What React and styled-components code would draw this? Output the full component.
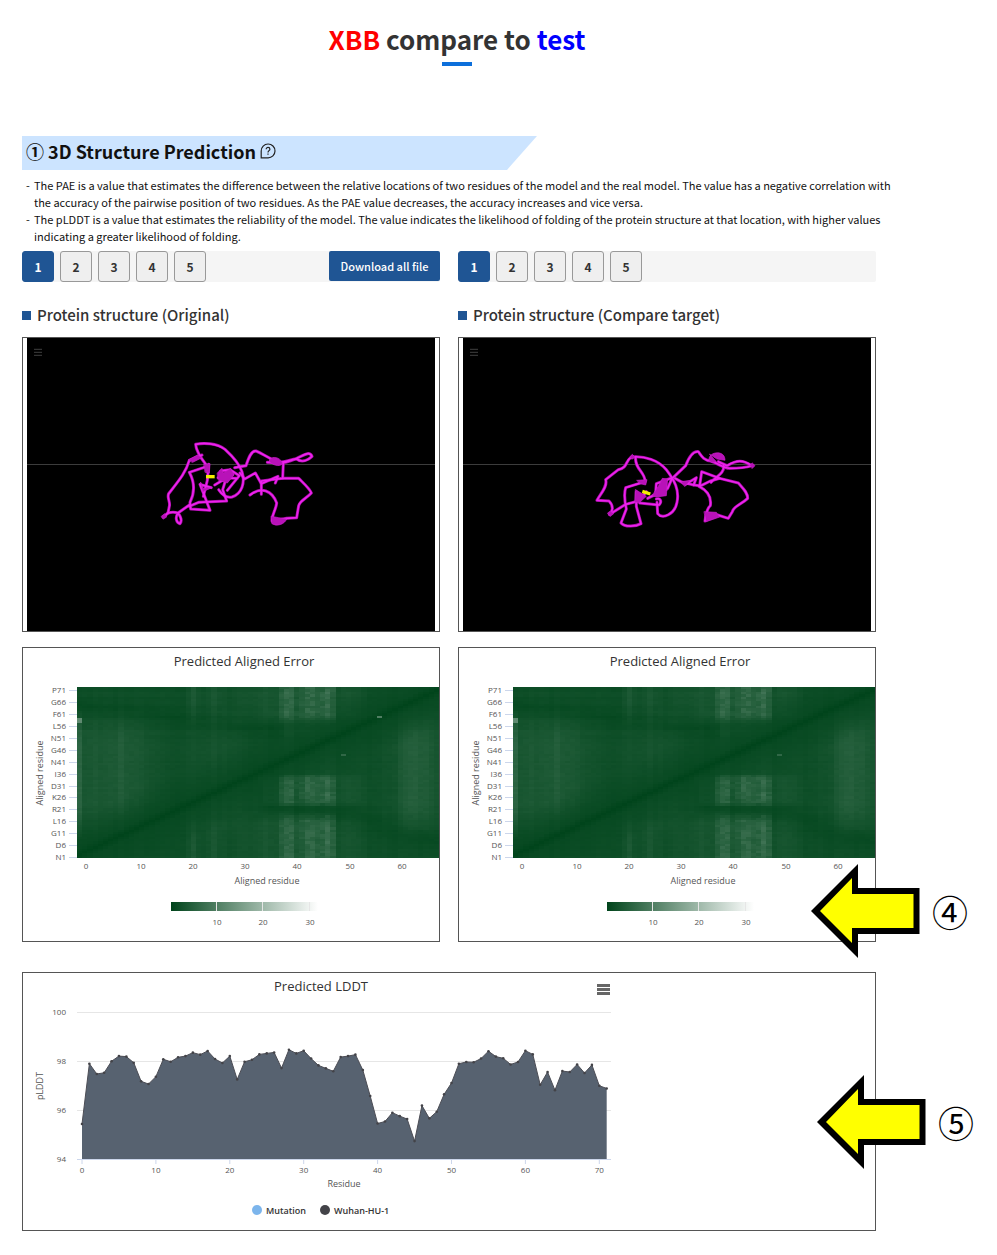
import React from "react";
import styled, { createGlobalStyle } from "styled-components";

const sans = '"Noto Sans CJK KR", "Noto Sans", sans-serif';
const chartSans = '"Open Sans", "Noto Sans", sans-serif';

const GlobalStyle = createGlobalStyle`
  *, *::before, *::after { box-sizing: border-box; }
  body { margin: 0; background: #fff; color: #333; font-family: ${sans}; }
`;

const Page = styled.main`
  padding: 20px 105px 24px 22px;
`;

const PageTitle = styled.h1`
  display: flex;
  flex-direction: column;
  align-items: center;
  gap: 4px;
  margin: 0 0 70px;
  font-size: 26px;
  line-height: 38px;
  font-weight: 700;
  &::after { content: ""; width: 30px; height: 4px; background: #0d6fdb; }
`;

const Variant = styled.span`
  color: ${(p) => p.$color};
`;

const Banner = styled.h2`
  display: flex;
  align-items: center;
  gap: 4px;
  width: 60%;
  max-width: 515px;
  height: 34px;
  margin: 0;
  padding: 0 0 4px 4px;
  background: #cce4ff;
  clip-path: polygon(0 0, 100% 0, calc(100% - 30px) 100%, 0 100%);
  color: #111;
  font-size: 18px;
  line-height: 30px;
  font-weight: 700;
`;

const Notes = styled.ul`
  margin: 7px -16px 6px 0;
  padding: 0 0 0 12px;
  list-style: none;
  color: #111;
  font-size: 11px;
  line-height: 17px;
  font-weight: 400;
`;

const Note = styled.li`
  &::before { content: "-"; float: left; margin-left: -8px; }
`;

const Columns = styled.div`
  display: grid;
  grid-template-columns: 1fr 1fr;
  gap: 15px 18px;
  margin-right: 16px;
`;

const Toolbar = styled.div`
  display: flex;
  gap: 6px;
  height: 31px;
  background: #f5f5f5;
  border-radius: 2px;
`;

const PageButton = styled.button`
  width: 32px;
  height: 31px;
  padding: 0;
  border: 1px solid ${(p) => (p.$active ? "#1f5594" : "#999")};
  border-radius: 3px;
  background: ${(p) => (p.$active ? "#1f5594" : "#efefef")};
  color: ${(p) => (p.$active ? "#fff" : "#333")};
  font: 700 12px/29px ${sans};
`;

const DownloadButton = styled.button`
  width: 111px;
  height: 30px;
  margin-left: auto;
  padding: 0;
  border: 0;
  border-radius: 2px;
  background: #1f5594;
  color: #fff;
  font: 500 11px/30px ${sans};
`;

const Subheading = styled.h3`
  display: flex;
  align-items: center;
  gap: 6px;
  height: 24px;
  margin: 6px 0 -5px;
  font-size: 15px;
  line-height: 24px;
  font-weight: 500;
  &::before { content: ""; width: 9px; height: 9px; background: #1f5594; }
`;

const Panel = styled.section`
  position: relative;
  border: 1px solid #555;
  background: #fff;
  svg { display: block; }
`;

const Viewer = styled(Panel)`
  padding: 0 4px;
  svg { width: 100%; height: auto; background: #000; }
`;

const WidePanel = styled(Panel)`
  margin: 30px 16px 0 0;
`;

const LddtArea = styled.div`
  position: relative;
  max-width: 596px;
`;

const MenuButton = styled.button`
  position: absolute;
  top: 9px;
  right: 7px;
  display: grid;
  place-items: center;
  width: 17px;
  height: 15px;
  padding: 0;
  border: 0;
  background: none;
`;

const Callout = styled.div`
  position: absolute;
  top: ${(p) => p.$top};
  right: ${(p) => p.$right};
  display: flex;
  align-items: center;
  gap: 12px;
  color: #000;
  font-size: 36px;
  line-height: 40px;
  font-weight: 400;
`;

const chartText = { fontFamily: chartSans };

function HelpIcon() {
  return (
    <svg width="16" height="16" viewBox="0 0 16 16" fill="none" stroke="#222" strokeWidth="1.2" aria-hidden="true">
      <path d="M1.2 14.8V8A6.9 6.9 0 1 1 8 14.8Z" />
      <path d="M6.2 6.2C6.2 3.8 9.9 3.9 9.9 6.2C9.9 7.6 8 7.7 8 9.4M8 10.6V11.8" />
    </svg>
  );
}

function Arrow() {
  return (
    <svg width="110" height="94" viewBox="0 0 110 94" aria-hidden="true">
      <path d="M1 47L48 0V24H109.500V70H48V94Z" fill="#000" />
      <path d="M10 47L42 14V30H103.500V64H42V79Z" fill="#ff0" />
    </svg>
  );
}

function Pager({ children }) {
  return (
    <Toolbar>
      {[1, 2, 3, 4, 5].map((n) => (
        <PageButton key={n} type="button" $active={n === 1}>{n}</PageButton>
      ))}
      {children}
    </Toolbar>
  );
}

const originalFold = {
  x: 369,
  y: 279,
  strands: [
    "M172 106C158 88 138 64 137 40C160 35 200 36 225 55C250 78 268 98 276 122C286 155 276 188 246 198C226 202 214 188 206 176",
    "M156 72L118 88C108 122 92 142 56 188C50 202 62 212 58 226L54 246L40 258",
    "M172 106L118 124C132 150 136 182 120 214L122 234L180 238L150 160L184 170",
    "M176 100L172 148L160 196",
    "M118 226L146 214L230 210L218 176L226 150",
    "M54 246C66 242 78 244 84 246C74 260 80 276 90 278C98 268 90 254 84 246L118 222",
    "M212 120L240 116L268 134L232 178M194 162L248 130M204 140L262 142",
    "M254 110L288 104C296 80 304 58 318 60C336 66 350 80 382 92C404 104 424 84 440 84C458 98 478 84 486 76C478 58 460 74 440 82C420 88 404 94 386 94",
    "M270 126L284 144L316 126L334 158L384 136L376 156",
    "M334 190V150L398 142L400 96L352 94",
    "M398 142L446 142C462 158 480 174 484 186C470 202 450 208 446 224L440 260L410 262L378 268",
    "M300 192C334 166 366 178 380 216C378 238 366 246 366 270",
  ],
  ribbons: [
    "M360 94C350 82 378 70 394 90C404 102 382 112 360 94Z",
    "M152 154L160 172L186 170L158 182Z",
    "M202 126L216 112L220 126L242 112L252 132L232 156L206 148Z",
    "M364 256L386 260L410 264C404 280 380 288 366 278Z",
    "M116 86L142 72L156 80L128 94ZM162 100L180 98L178 126L166 124Z",
    "M34 256L44 248L50 258L40 264Z",
  ],
  bridge: "M168 137H194",
};

const targetFold = {
  x: 366,
  y: 309,
  strands: [
    "M140 48C120 58 130 80 100 86L62 116C68 136 48 156 36 178L72 180C86 194 84 210 74 220",
    "M140 48C180 44 220 58 244 86C268 118 284 146 276 184C270 220 232 236 218 218L216 184",
    "M152 48C148 84 182 94 180 122L122 140C116 160 120 186 124 204L108 246C120 260 154 256 168 248L154 196V152",
    "M74 220L122 190L160 180L184 152",
    "M164 186L222 192C232 182 226 170 214 174",
    "M188 172L248 142L262 110L214 128L212 154L244 146",
    "M262 112L302 74C312 48 326 30 340 32C350 46 356 58 378 60C404 70 416 82 434 82C454 82 476 82 500 74C474 56 456 56 426 74L400 62",
    "M270 112L302 130L334 110L326 132L294 124",
    "M326 132L344 134L350 92L404 112L376 120L344 136",
    "M404 112L460 126C474 142 488 154 488 172C470 190 446 194 442 212L430 232L398 222L362 238",
    "M342 136C366 148 380 168 376 194C364 204 362 224 360 240",
    "M416 74C418 98 396 104 378 124",
  ],
  ribbons: [
    "M374 40L394 62C370 72 364 48 384 38C400 32 420 36 420 58L396 54Z",
    "M152 146L184 166L164 184L150 184Z",
    "M220 136L232 112L248 114L244 164L214 168L202 164Z",
    "M358 212L394 214L404 228L364 242Z",
    "M288 122L316 118L300 136Z",
    "M68 216L76 210L86 218L76 226Z",
    "M494 72L502 66L510 74L502 82ZM134 48L142 40L150 48L142 54Z",
    "M156 118L186 116L182 132L166 128Z",
  ],
  bridge: "M172 151L196 159",
};

function Fold({ data, label }) {
  return (
    <svg viewBox="0 0 1224 879" role="img" aria-label={label}>
      <path d="M21 34H45M21 43H45M21 52H45" stroke="#333" strokeWidth="4" />
      <path d="M0 379.500H1224" stroke="#3c3c3c" strokeWidth="3" />
      <g transform={`translate(${data.x} ${data.y})`} fill="none" strokeLinejoin="round" strokeLinecap="round">
        {data.strands.map((d) => <path key={d} d={d} stroke="#a50fa5" strokeWidth="9" />)}
        {data.strands.map((d) => <path key={d} d={d} stroke="#ee22ee" strokeWidth="5" />)}
        {data.ribbons.map((d) => <path key={d} d={d} fill="#b812b8" stroke="#d01cd0" strokeWidth="2" />)}
        <path d={data.bridge} stroke="#f4ee00" strokeWidth="10" strokeLinecap="butt" />
      </g>
    </svg>
  );
}

const COLS = 70;
const ROWS = 72;
const clamp = (v) => Math.max(0, Math.min(1, v));
const bump = (v, mid, width) => Math.exp(-((v - mid) * (v - mid)) / (width * width));
const band = (v, from, to, soft) => clamp((v - from) / soft + 0.5) * clamp((to - v) / soft + 0.5);
const noise = (a, b) => {
  const s = Math.sin(a * 12.9898 + b * 78.233) * 43758.5453;
  return s - Math.floor(s);
};

const loopWeights = { 39: 2.4, 40: 4.2, 41: 3.6, 42: 2, 43: 3, 44: 4.2, 45: 4, 46: 3.2, 47: 3.4, 48: 4.8, 49: 2.6 };

function errorAt(col, row, outlier) {
  if (col === 0 && (row === 57 || row === 58)) return 12;
  if (col === 51 && row === 43) return 6;
  if (outlier && col === 58 && row === 59) return 10;
  const distance = Math.abs(row - col - 1);
  const away = clamp(distance / 16);
  const middle = band(row, 14, 57, 14);
  const outer = 1 - band(row, 14, 60, 12);
  const loop = Math.max(band(row, -8, 17, 4), band(row, 22, 34, 2), band(row, 58, 82, 3));
  let v = 0.8 * clamp(distance / 3) + 0.9 * away;
  v += middle * away * (1.6 * bump(col, 2, 3) + 2.2 * bump(col, 8, 3) + bump(col, 13, 3));
  v += (col === 0 ? 3 : 0) * middle;
  v += away * outer * (1.6 * bump(col, 22, 1) + 1.2 * bump(col, 26, 2) + 0.9 * bump(col, 33, 3));
  v += away * middle * 0.8 * bump(col, 26, 6);
  v += away * middle * 2.6 * bump(col, 65, 4);
  if (loopWeights[col]) {
    v += loopWeights[col] * (0.12 + loop * (0.75 + 0.35 * noise(col, row))) * clamp(distance / 10);
  }
  v += away * loop * 1.1 * (bump(col, 37, 2) + bump(col, 52, 3));
  v *= 0.82 + 0.2 * noise(col, 3) + 0.14 * noise(col, row);
  if (col < 40) v -= 0.8 * bump(row, 63 - col * 0.26, 4) * away;
  if (col > 34) v -= 0.8 * bump(row, 42 - col * 0.5, 5) * away;
  return Math.max(0, v + (noise(row, 9) - 0.5) * 0.4 * away);
}

function shade(v) {
  const t = Math.min(1, v / 32);
  return `rgb(${Math.round(255 * t)},${Math.round(68 + 187 * t)},${Math.round(27 + 228 * t)})`;
}

const yResidues = ["N1", "D6", "G11", "L16", "R21", "K26", "D31", "I36", "N41", "G46", "N51", "L56", "F61", "G66", "P71"];

function AlignedErrorChart({ id, outlier }) {
  const cells = [];
  const w = 362 / COLS;
  const h = 171 / ROWS;
  for (let c = 0; c < COLS; c += 1) {
    for (let r = 0; r < ROWS; r += 1) {
      cells.push(
        <rect key={`${c}-${r}`} x={c * w} y={171 - (r + 1) * h} width={w} height={h} fill={shade(errorAt(c, r, outlier))} />
      );
    }
  }
  return (
    <svg viewBox="0 0 416 293" width="100%" style={chartText} role="img" aria-label="Predicted Aligned Error">
      <text x="221" y="18" textAnchor="middle" fontSize="13" fill="#333">Predicted Aligned Error</text>
      <rect x="54" y="39" width="362" height="171" fill="#0a4d24" />
      <g transform="translate(54 39)" shapeRendering="crispEdges">{cells}</g>
      <g fontSize="8" fill="#555" textAnchor="end">
        {yResidues.map((t, i) => <text key={t} x="43" y={212 - Math.round(i * 11.9)}>{t}</text>)}
      </g>
      <path d={yResidues.map((t, i) => `M46 ${209.5 - Math.round(i * 11.9)}H54`).join("")} stroke="#ccd6eb" />
      <g fontSize="8" fill="#555" textAnchor="middle">
        {[0, 10, 20, 30, 40, 50, 60].map((n) => <text key={n} x={n ? Math.round(65.5 + n * 5.22) : 63} y="221">{n}</text>)}
      </g>
      <text x="244" y="236" textAnchor="middle" fontSize="9" fill="#555">Aligned residue</text>
      <text transform="translate(20 125) rotate(-90)" textAnchor="middle" fontSize="9" fill="#555">Aligned residue</text>
      <defs>
        <linearGradient id={id}>
          <stop offset="0" stopColor="#00441b" />
          <stop offset="1" stopColor="#fff" />
        </linearGradient>
      </defs>
      <rect x="148" y="254" width="147" height="9" fill={`url(#${id})`} />
      <path d="M193.500 254V263M239.500 254V263M286.500 254V263" stroke="#e6e6e6" />
      <g fontSize="8" fill="#555" textAnchor="middle">
        <text x="194" y="277">10</text>
        <text x="240" y="277">20</text>
        <text x="287" y="277">30</text>
      </g>
    </svg>
  );
}

const scores = [
  95.43, 97.89, 97.47, 97.52, 97.99, 98.2, 98.18, 97.93, 97.17, 97.06, 97.36, 98.07, 97.97, 98.15, 98.2, 98.34, 98.26, 98.41,
  98.08, 97.92, 98.2, 97.25, 97.97, 98.05, 98.27, 98.31, 98.35, 97.71, 98.46, 98.31, 98.42, 98.1, 97.82, 97.7, 97.58, 98.16,
  98.2, 98.26, 97.63, 96.57, 95.45, 95.53, 95.89, 95.75, 95.63, 94.73, 96.18, 95.66, 95.93, 96.64, 97.1, 97.89, 97.96, 97.95,
  98.1, 98.4, 98.18, 98.11, 97.86, 97.96, 98.42, 98.27, 97.03, 97.55, 96.81, 97.59, 97.55, 97.86, 97.51, 97.84, 96.99, 96.88,
];

function LddtChart() {
  const px = (i) => 59 + i * 7.39;
  const py = (v) => 39 + (100 - v) * 24.5;
  const line = scores.map((v, i) => `${px(i)},${py(v)}`).join(" ");
  return (
    <svg viewBox="0 0 596 257" width="100%" style={chartText} role="img" aria-label="Predicted LDDT">
      <text x="298" y="18" textAnchor="middle" fontSize="13" fill="#333">Predicted LDDT</text>
      <path d="M54 39.500H588M54 88.500H588M54 137.500H588" stroke="#e6e6e6" />
      <path d="M54 186.500H588" stroke="#ccd6eb" />
      <path d={[0, 10, 20, 30, 40, 50, 60, 70].map((n) => `M${px(n)} 186V191`).join("")} stroke="#ccd6eb" />
      <polygon points={`${px(0)},186 ${line} ${px(71)},186`} fill="#576270" />
      <polyline points={line} fill="none" stroke="#4c4d55" />
      {scores.map((v, i) => <circle key={i} cx={px(i)} cy={py(v)} r="1.3" fill="#434348" />)}
      <g fontSize="8" fill="#555" textAnchor="end">
        <text x="43" y="42">100</text>
        <text x="43" y="91">98</text>
        <text x="43" y="140">96</text>
        <text x="43" y="189">94</text>
      </g>
      <g fontSize="8" fill="#555" textAnchor="middle">
        {[0, 10, 20, 30, 40, 50, 60, 70].map((n) => <text key={n} x={px(n)} y="200">{n}</text>)}
      </g>
      <text x="321" y="214" textAnchor="middle" fontSize="9" fill="#555">Residue</text>
      <text transform="translate(20 113) rotate(-90)" textAnchor="middle" fontSize="9" fill="#555">pLDDT</text>
      <circle cx="234" cy="237" r="5" fill="#7cb5ec" />
      <circle cx="302" cy="237" r="5" fill="#434348" />
      <g fontSize="9" fontWeight="600" fill="#333">
        <text x="243" y="241">Mutation</text>
        <text x="311" y="241">Wuhan-HU-1</text>
      </g>
    </svg>
  );
}

export default function App() {
  return (
    <>
      <GlobalStyle />
      <Page>
        <PageTitle>
          <span><Variant $color="#f00">XBB</Variant> compare to <Variant $color="#00f">test</Variant></span>
        </PageTitle>
        <Banner>
          <span>① 3D Structure Prediction</span>
          <HelpIcon />
        </Banner>
        <Notes>
          <Note>The PAE is a value that estimates the difference between the relative locations of two residues of the model and the real model. The value has a negative correlation with the accuracy of the pairwise position of two residues. As the PAE value decreases, the accuracy increases and vice versa.</Note>
          <Note>The pLDDT is a value that estimates the reliability of the model. The value indicates the likelihood of folding of the protein structure at that location, with higher values indicating a greater likelihood of folding.</Note>
        </Notes>
        <Columns>
          <Pager><DownloadButton type="button">Download all file</DownloadButton></Pager>
          <Pager />
          <Subheading>Protein structure (Original)</Subheading>
          <Subheading>Protein structure (Compare target)</Subheading>
          <Viewer><Fold data={originalFold} label="Original protein structure" /></Viewer>
          <Viewer><Fold data={targetFold} label="Compare target protein structure" /></Viewer>
          <Panel><AlignedErrorChart id="scale-original" outlier /></Panel>
          <Panel>
            <AlignedErrorChart id="scale-target" />
            <Callout $top="216px" $right="-93px"><Arrow /><span>④</span></Callout>
          </Panel>
        </Columns>
        <WidePanel>
          <LddtArea>
            <LddtChart />
            <MenuButton type="button" aria-label="Chart menu">
              <svg width="13" height="11" viewBox="0 0 13 11" aria-hidden="true">
                <path d="M0 1.500H13M0 5.500H13M0 9.500H13" stroke="#666" strokeWidth="3" />
              </svg>
            </MenuButton>
          </LddtArea>
          <Callout $top="102px" $right="-99px"><Arrow /><span>⑤</span></Callout>
        </WidePanel>
      </Page>
    </>
  );
}
